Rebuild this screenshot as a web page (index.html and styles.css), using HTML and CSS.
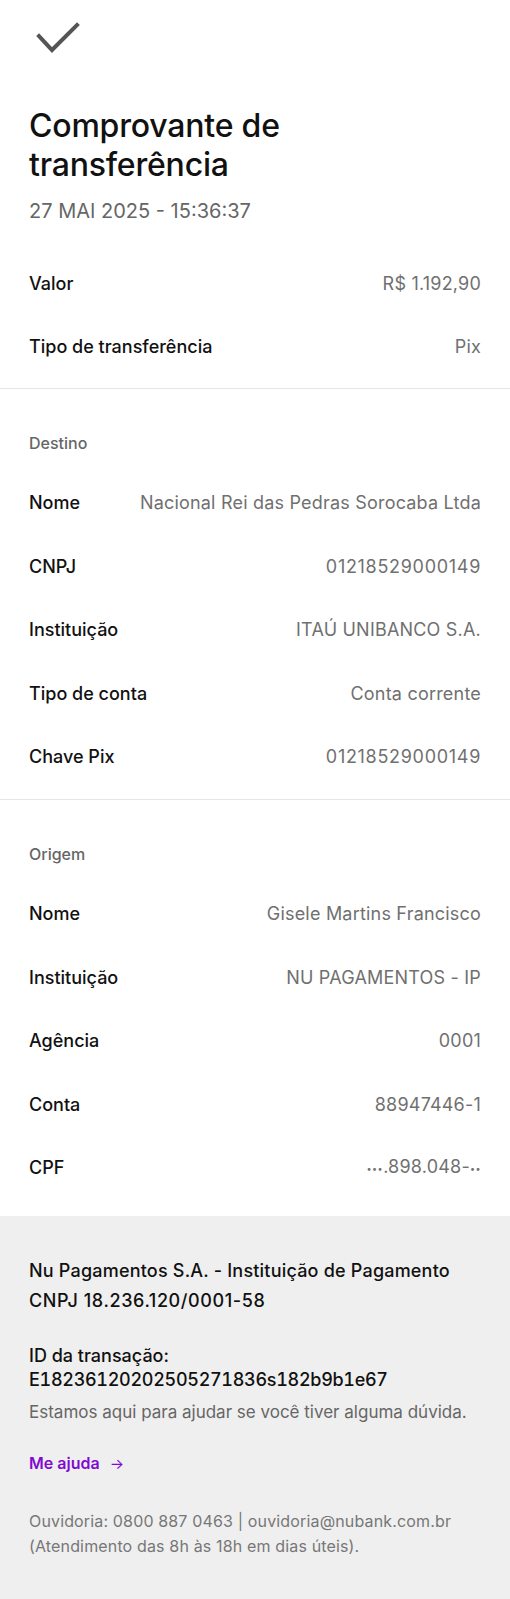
FILE: index.html
```html
<!DOCTYPE html>
<html lang="pt-BR">
<head>
    <meta charset="UTF-8">
    <meta name="viewport" content="width=device-width, initial-scale=1.0">
    <title>Comprovante de transferência</title>
    <link rel="stylesheet" href="styles.css">
</head>
<body>
    <!-- topo com icone de check -->
    <header class="top">
        <svg class="check" width="52" height="36" viewBox="0 0 52 36">
            <polyline points="10,16 23,30 48,5" fill="none" stroke="#555" stroke-width="4" stroke-linecap="square"/>
        </svg>
        <h1 class="title">Comprovante de<br>transferência</h1>
        <p class="date">27 MAI 2025 - 15:36:37</p>
    </header>

    <section class="block first">
        <div class="row"><span class="label">Valor</span><span class="value">R$ 1.192,90</span></div>
        <div class="row"><span class="label">Tipo de transferência</span><span class="value">Pix</span></div>
    </section>

    <section class="block">
        <h2 class="block-title">Destino</h2>
        <div class="row"><span class="label">Nome</span><span class="value">Nacional Rei das Pedras Sorocaba Ltda</span></div>
        <div class="row"><span class="label">CNPJ</span><span class="value doc">01218529000149</span></div>
        <div class="row"><span class="label">Instituição</span><span class="value">ITAÚ UNIBANCO S.A.</span></div>
        <div class="row"><span class="label">Tipo de conta</span><span class="value">Conta corrente</span></div>
        <div class="row"><span class="label">Chave Pix</span><span class="value doc">01218529000149</span></div>
    </section>

    <section class="block last">
        <h2 class="block-title">Origem</h2>
        <div class="row"><span class="label">Nome</span><span class="value">Gisele Martins Francisco</span></div>
        <div class="row"><span class="label">Instituição</span><span class="value">NU PAGAMENTOS - IP</span></div>
        <div class="row"><span class="label">Agência</span><span class="value">0001</span></div>
        <div class="row"><span class="label">Conta</span><span class="value">88947446-1</span></div>
        <div class="row"><span class="label">CPF</span><span class="value"><span class="mask">•••</span>.898.048-<span class="mask">••</span></span></div>
    </section>

    <!-- rodape cinza -->
    <footer class="footer">
        <p class="company">Nu Pagamentos S.A. - Instituição de Pagamento<br><span class="company-doc">CNPJ 18.236.120/0001-58</span></p>
        <p class="tx-id">ID da transação:<br><span class="tx-code">E18236120202505271836s182b9b1e67</span></p>
        <p class="help">Estamos aqui para ajudar se você tiver alguma dúvida.</p>
        <a class="help-link" href="#">Me ajuda <span class="arrow">→</span></a>
        <p class="ombudsman">Ouvidoria: 0800 887 0463 | ouvidoria@nubank.com.br<br>(Atendimento das 8h às 18h em dias úteis).</p>
    </footer>
</body>
</html>
```

FILE: styles.css
```css
/* Base da pagina */
body {
    margin: 0;
    background-color: #fff;
    font-family: Inter, "Noto Sans", sans-serif;
    color: #111;
}

p, h1, h2 {
    margin: 0;
}

/* Cabecalho */
.top {
    padding: 20px 29px 0;
}

.check {
    display: block;
    margin-left: -29px;
    padding-left: 29px;
    box-sizing: content-box;
}

.title {
    margin-top: 50px;
    font-size: 32px;
    line-height: 39px;
    font-weight: 500;
    letter-spacing: -0.2px;
    color: #111;
}

.date {
    margin-top: 15px;
    font-size: 20px;
    line-height: 24px;
    color: #666;
}

/* Blocos de informacao */
.block {
    padding: 42px 29px 10px;
    border-bottom: 1px solid #e6e6e6;
}

.block.first {
    padding-top: 29px;
    padding-bottom: 9px;
}

.block.last {
    padding-bottom: 16px;
    border-bottom: none;
}

.block-title {
    font-size: 16px;
    line-height: 24px;
    font-weight: 500;
    color: #666;
    margin-bottom: 17px;
}

.row {
    display: flex;
    justify-content: space-between;
    align-items: center;
    height: 63.4px;
    font-size: 18px;
    line-height: 24px;
}

.label {
    font-weight: 500;
    color: #111;
}

.value {
    color: #707070;
    letter-spacing: 0.2px;
    text-align: right;
}

.value.doc {
    letter-spacing: 0.7px;
}

/* pontinhos do CPF mascarado */
.mask {
    font-size: 9px;
    letter-spacing: 0.5px;
    vertical-align: 1px;
}

/* Rodape */
.footer {
    background-color: #efefef;
    padding: 40px 29px 41px;
    border-bottom: 1px solid #bbb;
}

.company {
    font-size: 18px;
    line-height: 30px;
    font-weight: 500;
    letter-spacing: 0.2px;
}

.company-doc {
    letter-spacing: 0.6px;
}

.tx-id {
    margin-top: 28px;
    font-size: 18px;
    line-height: 24px;
    font-weight: 500;
}

.tx-code {
    font-variant-numeric: tabular-nums;
    letter-spacing: -0.3px;
}

.help {
    margin-top: 9px;
    font-size: 17px;
    line-height: 22px;
    color: #666;
}

.help-link {
    display: block;
    margin-top: 28px;
    font-size: 16px;
    line-height: 24px;
    font-weight: 600;
    color: #820ad1;
    text-decoration: none;
}

.arrow {
    margin-left: 6px;
    font-weight: 400;
    font-size: 15px;
}

.ombudsman {
    margin-top: 33px;
    font-size: 16px;
    line-height: 25px;
    letter-spacing: 0.15px;
    color: #777;
}
```
